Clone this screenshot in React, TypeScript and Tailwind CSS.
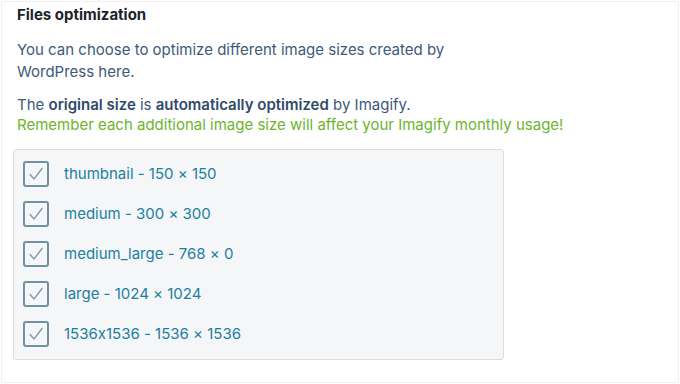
const sizes = [
  "thumbnail - 150 × 150",
  "medium - 300 × 300",
  "medium_large - 768 × 0",
  "large - 1024 × 1024",
  "1536x1536 - 1536 × 1536",
];

function CheckBox() {
  return (
    <span className="flex h-[26px] w-[26px] shrink-0 items-center justify-center rounded-[3px] border-2 border-[#7190a4]">
      <svg width="16" height="14" viewBox="0 0 16 14" fill="none">
        <path d="M2 7.5 L6 12 L14 1.5" stroke="#7f9db2" strokeWidth="1.4" strokeLinecap="round" strokeLinejoin="round" />
      </svg>
    </span>
  );
}

export default function App() {
  return (
    <div
      className="h-[384px] w-[680px] bg-white p-px [font-feature-settings:'calt'_0]"
      style={{ fontFamily: "Inter, 'Liberation Sans', sans-serif" }}
    >
      <div className="h-[382px] border border-[#f0f0f1] px-[15px] pt-[3px]">
        <h2 className="text-[15px] font-bold leading-[20px] text-[#1d2327]">Files optimization</h2>

        <p className="mt-[14px] text-[15px] leading-[22px] text-[#3d5a7a]">
          You can choose to optimize different image sizes created by
          <br />
          WordPress here.
        </p>

        <p className="mt-[12px] text-[15px] leading-[20px] text-[#3d5a7a]">
          The <strong className="font-semibold text-[#2f4a68]">original size</strong> is{" "}
          <strong className="font-semibold text-[#2f4a68]">automatically optimized</strong> by Imagify.
          <br />
          <span className="text-[#6bb52c]">Remember each additional image size will affect your Imagify monthly usage!</span>
        </p>

        <div className="-ml-[4px] mt-[14px] flex w-[491px] flex-col gap-[14px] rounded-[3px] border border-[#dcdde1] bg-[#f5f6f8] pb-[12px] pl-[9px] pt-[11px]">
          {sizes.map((s) => (
            <label key={s} className="flex items-center gap-[15px]">
              <CheckBox />
              <span className="text-[15px] leading-[20px] text-[#1b7fa1]">{s}</span>
            </label>
          ))}
        </div>
      </div>
    </div>
  );
}
